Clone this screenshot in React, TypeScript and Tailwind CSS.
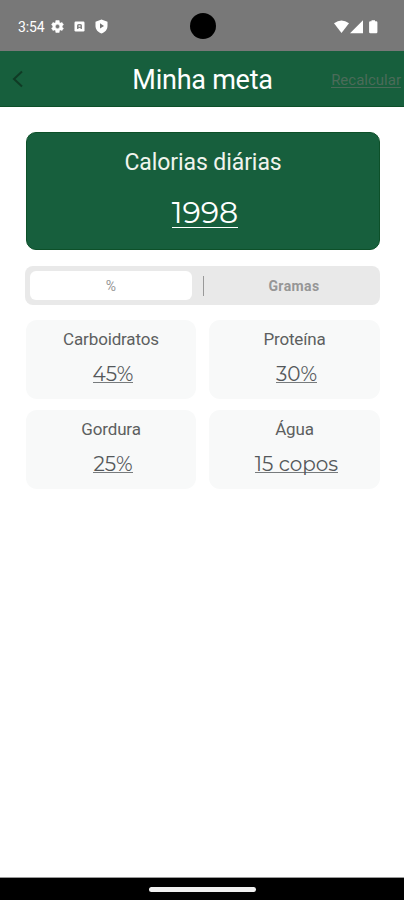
import React from 'react';

type MacroProps = { label: string; value: string };

function MacroCard({ label, value }: MacroProps) {
  return (
    <div className="flex h-[79px] flex-col items-center rounded-[11px] bg-[#f8f9f9] pt-[9px] text-[#5d5f60]">
      <span className="text-[17px] leading-[20px] tracking-[-0.15px]">{label}</span>
      <span className="ml-[4px] mt-[15px] h-[19px] whitespace-nowrap border-b border-[#777b7d] font-['Montserrat','Inter',sans-serif] text-[20px] leading-[21px] text-[#54585b]">
        {value}
      </span>
    </div>
  );
}

function StatusBar() {
  return (
    <div className="relative flex h-[51px] items-center bg-[#787878] pl-[18px] pr-[26px] pt-[2px] text-white">
      <span className="w-[27px] whitespace-nowrap text-[14px] leading-[16px] tracking-[-0.1px]">3:54</span>
      <svg className="ml-[5px]" width="15" height="15" viewBox="0 0 24 24" fill="currentColor">
        <path
          fillRule="evenodd"
          stroke="currentColor"
          strokeWidth="0.8"
          d="M19.4 13a7.500 7.500 0 0 0 0-2l2.100-1.650-2.200-3.800-2.500 1a7.700 7.700 0 0 0-1.700-1L14.700 2.500H9.300L8.900 5.550a7.700 7.700 0 0 0-1.700 1l-2.500-1-2.200 3.800L4.600 11a7.500 7.500 0 0 0 0 2l-2.100 1.650 2.200 3.800 2.500-1a7.700 7.700 0 0 0 1.700 1l.4 3.050h5.400l.4-3.050a7.700 7.700 0 0 0 1.700-1l2.500 1 2.200-3.800zM12 15.500a3.500 3.500 0 1 1 0-7 3.500 3.500 0 0 1 0 7z"
        />
      </svg>
      <svg className="ml-[9px]" width="11" height="11" viewBox="0 0 11 11">
        <rect x="0.500" y="0.500" width="10" height="10" rx="1.200" fill="white" />
        <path d="M3 8V4.500Q3 3 4.500 3H6.500Q8 3 8 4.500V8H6.500V7H4.500V8Z" fill="#858585" />
        <rect x="4.600" y="4.400" width="1.800" height="1.300" fill="white" />
      </svg>
      <svg className="ml-[10px]" width="13" height="15" viewBox="0 0 13 15">
        <path d="M6.500.5 12.500 2.800V7C12.500 10.500 10 13.400 6.500 14.500 3 13.400.5 10.500.5 7V2.800Z" fill="white" />
        <path d="M5 4.300 9 6.900 5 9.500Z" fill="#747474" />
      </svg>
      <div className="absolute left-[190px] top-[13px] h-[26px] w-[26px] rounded-full bg-black" />
      <svg className="ml-auto" width="44" height="14" viewBox="0 0 44 14" fill="white">
        <path d="M0 3.200Q7.500-2 15 3.200L7.500 13Z" />
        <path d="M29 .3V13.300H16Z" />
        <path d="M37.500.3h3.500v1h1.200q1.200 0 1.200 1.200v9.600q0 1.200-1.200 1.200h-5.900q-1.200 0-1.200-1.200V2.500q0-1.200 1.200-1.200h1.200Z" />
      </svg>
    </div>
  );
}

export default function App() {
  return (
    <div className="flex h-[900px] w-[404px] flex-col overflow-hidden bg-white font-['Roboto',sans-serif]">
      <StatusBar />
      <header className="grid h-[56px] grid-cols-[132px_141px_1fr] items-center border-b border-[#0d5029] bg-[#175f3d]">
        <svg className="ml-[12px]" width="12" height="18" viewBox="0 0 12 18" fill="none">
          <path d="M10 1.500 2 9l8 7.500" stroke="#103b25" strokeWidth="2" />
        </svg>
        <h1 className="whitespace-nowrap pt-[3px] text-center text-[27px] leading-[32px] tracking-[-0.25px] text-white">
          Minha meta
        </h1>
        <span className="ml-auto mr-[3px] mt-[2px] h-[17px] whitespace-nowrap border-b border-[#4b6b59] text-[15px] leading-[18px] text-[#4b6b59]">
          Recalcular
        </span>
      </header>
      <main className="flex flex-1 flex-col pl-[25px] pr-[24px] pt-[25px]">
        <section className="ml-[1px] flex h-[118px] flex-col items-center rounded-[10px] border border-[#0d5029] bg-[#175f3d] pt-[16px] text-white">
          <h2 className="whitespace-nowrap text-[23px] leading-[28px] tracking-[-0.08px] text-[#f0f4ed]">
            Calorias diárias
          </h2>
          <span className="ml-[4px] mt-[19px] h-[32px] border-b border-white font-['Montserrat','Inter',sans-serif] text-[30px] leading-[34px]">
            1998
          </span>
        </section>
        <div className="mt-[16px] flex h-[39px] items-center rounded-[8px] bg-[#e9e9e9] pl-[5px] text-[14px] text-[#969696]">
          <div className="flex h-[29px] w-[162px] items-center justify-center rounded-[6px] bg-white pt-[2px]">%</div>
          <div className="ml-[11px] h-[20px] w-px bg-[#999999]" />
          <div className="flex-1 pl-[4px] pt-[2px] text-center font-bold tracking-[0.4px]">Gramas</div>
        </div>
        <div className="ml-[1px] mt-[15px] grid grid-cols-[170px_171px] gap-x-[13px] gap-y-[11px]">
          <MacroCard label="Carboidratos" value="45%" />
          <MacroCard label="Proteína" value="30%" />
          <MacroCard label="Gordura" value="25%" />
          <MacroCard label="Água" value="15 copos" />
        </div>
      </main>
      <footer className="flex h-[23px] items-center justify-center border-t border-[#999999] bg-black">
        <div className="h-[5px] w-[107px] rounded-full bg-[#f1f1f1]" />
      </footer>
    </div>
  );
}
